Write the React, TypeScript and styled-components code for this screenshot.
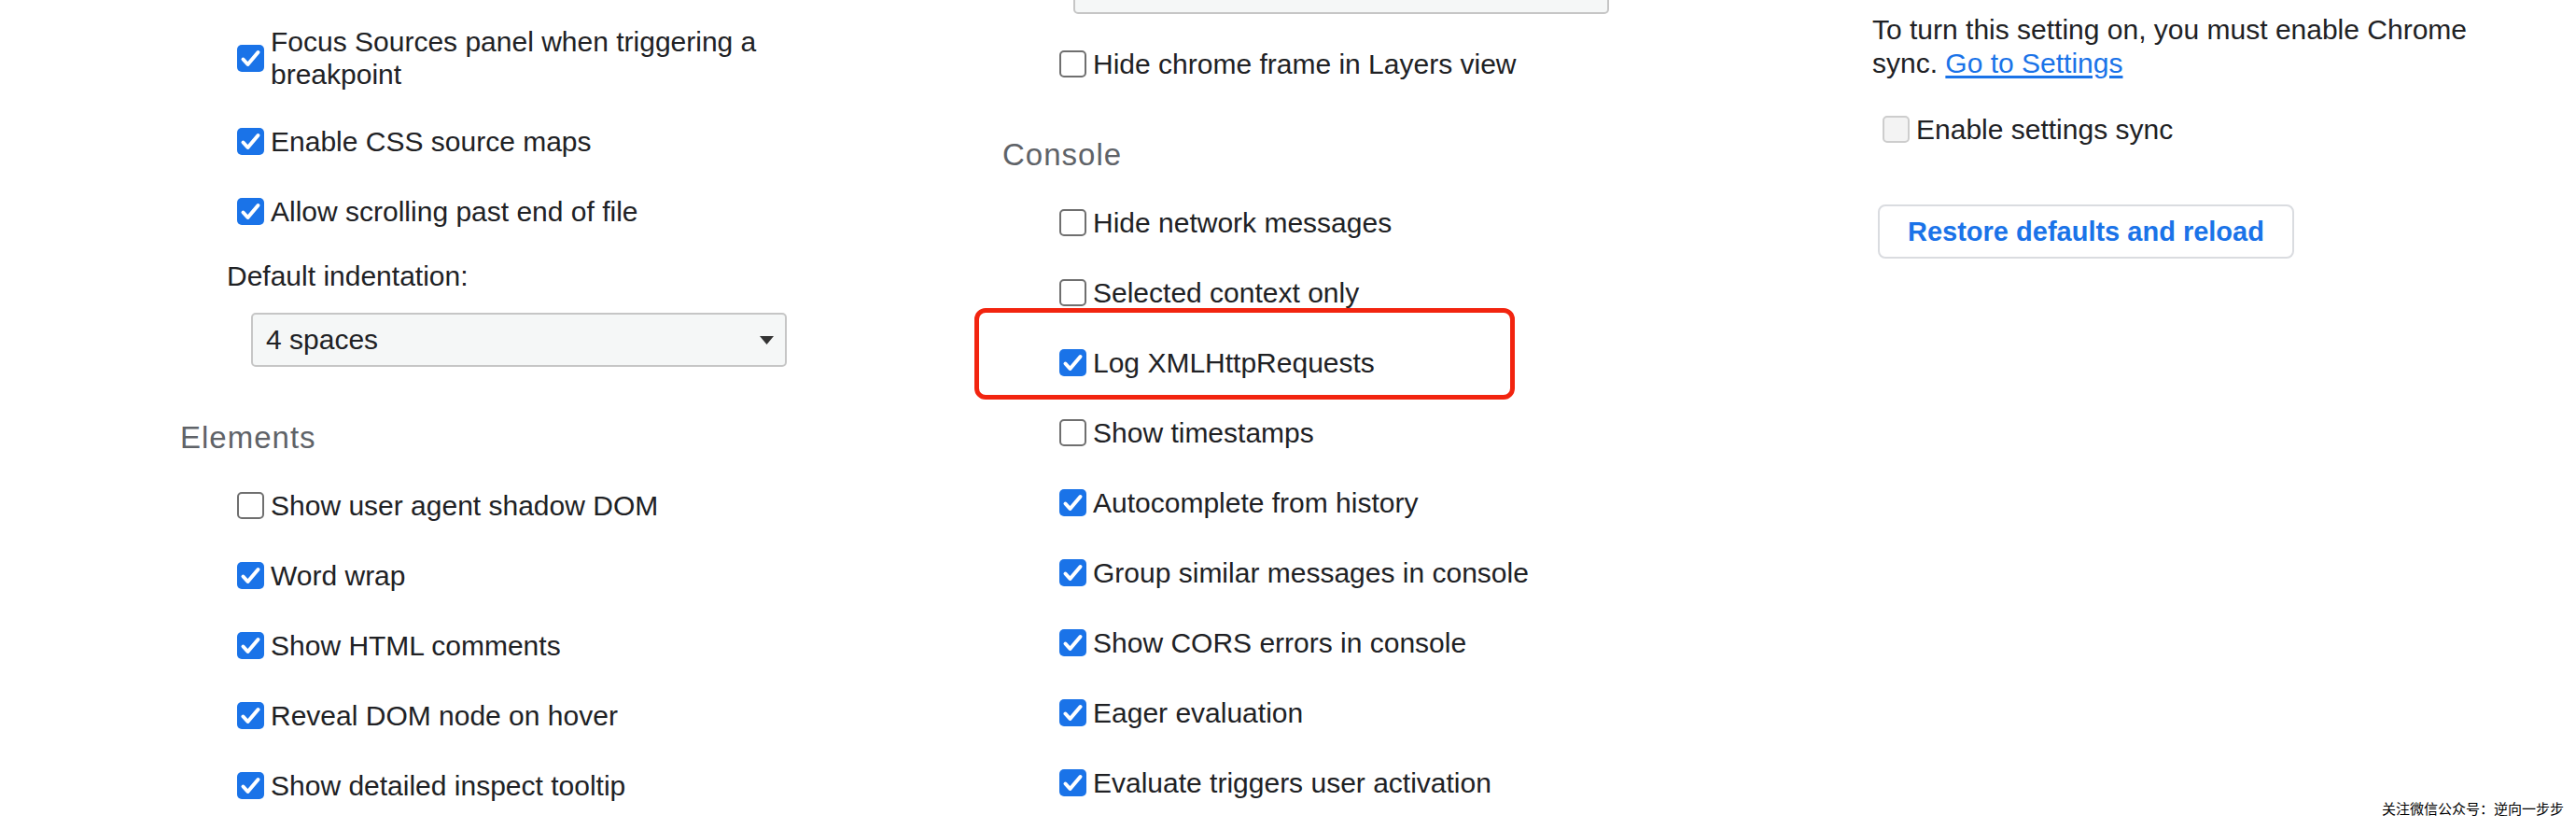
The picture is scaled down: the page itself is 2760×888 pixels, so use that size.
import React from "react";
import styled, { createGlobalStyle, css } from "styled-components";

const GlobalStyle = createGlobalStyle`
  html, body {
    margin: 0;
    padding: 0;
    background: #ffffff;
    overflow: hidden;
  }
  body {
    font-family: "Liberation Sans", Arial, sans-serif;
    color: #202124;
  }
  * { box-sizing: border-box; }
`;

const Page = styled.div`
  position: relative;
  width: 2760px;
  height: 888px;
  overflow: hidden;
  display: flex;
  align-items: flex-start;
  padding-left: 193px;
  background: #ffffff;
`;

const Column = styled.div<{ $offset: number }>`
  width: 881px;
  flex-shrink: 0;
  display: flex;
  flex-direction: column;
  align-items: flex-start;
  margin-top: ${(p) => p.$offset}px;
`;

const Section = styled.section`
  display: flex;
  flex-direction: column;
  align-items: flex-start;
  & + & {
    margin-top: 43px;
  }
`;

const SectionTitle = styled.h2`
  margin: -1px 0 17px 0;
  font-size: 33px;
  line-height: 36px;
  letter-spacing: 1px;
  font-weight: 400;
  color: #5f6368;
`;

const CheckRow = styled.label<{ $multi?: boolean; $indent?: number }>`
  display: flex;
  align-items: center;
  gap: 7px;
  padding: ${(p) => (p.$multi ? "17px" : "20px")} 0;
  padding-left: ${(p) => p.$indent ?? 61}px;
`;

type BoxState = "on" | "off" | "disabled";

const Box = styled.span<{ $state: BoxState }>`
  width: 29px;
  height: 29px;
  flex-shrink: 0;
  border-radius: 5px;
  display: flex;
  align-items: center;
  justify-content: center;
  ${(p) =>
    p.$state === "on"
      ? css`
          background: #1a73e8;
          border: 0;
        `
      : p.$state === "off"
      ? css`
          background: #ffffff;
          border: 2px solid #6f6f6f;
        `
      : css`
          background: #f3f3f3;
          border: 2px solid #cdcdcd;
        `}
`;

const LabelText = styled.span`
  font-size: 30px;
  line-height: 35px;
  color: #202124;
  max-width: 560px;
`;

const FieldLabel = styled.div`
  margin: 14px 0 0 50px;
  font-size: 30px;
  line-height: 36px;
  color: #202124;
`;

const SelectBox = styled.div`
  width: 574px;
  height: 58px;
  margin: 21px 0 16px 76px;
  padding: 0 12px 0 14px;
  display: flex;
  align-items: center;
  justify-content: space-between;
  border: 2px solid #c6c6c6;
  border-radius: 5px;
  background: #f5f7f7;
  font-size: 30px;
  line-height: 36px;
  color: #202124;
`;

const Paragraph = styled.p`
  margin: 0 0 0 51px;
  max-width: 680px;
  font-size: 30px;
  line-height: 36px;
  color: #202124;
`;

const Link = styled.a`
  color: #1a73e8;
  text-decoration: underline;
  text-underline-offset: 3px;
`;

const SyncRow = styled.div`
  margin-top: 15px;
`;

const Button = styled.button`
  margin: 43px 0 0 57px;
  padding: 9px 30px;
  border: 2px solid #dadce0;
  border-radius: 8px;
  background: #ffffff;
  color: #1a73e8;
  font-family: "Liberation Sans", Arial, sans-serif;
  font-size: 29px;
  line-height: 36px;
  font-weight: 700;
  cursor: pointer;
`;

const Highlight = styled.div`
  position: absolute;
  left: 1044px;
  top: 330px;
  width: 579px;
  height: 98px;
  border: 5px solid #f2240f;
  border-radius: 12px;
  pointer-events: none;
`;

const Watermark = styled.div`
  position: absolute;
  right: 13px;
  top: 858px;
  font-family: "Noto Sans CJK SC", sans-serif;
  font-size: 15px;
  line-height: 16px;
  color: #000000;
  white-space: nowrap;
`;

const Check = () => (
  <svg width="29" height="29" viewBox="0 0 29 29" aria-hidden="true">
    <path
      d="M6.5 15.5 L11.5 21 L22.5 8"
      fill="none"
      stroke="#ffffff"
      strokeWidth="4"
      strokeLinecap="round"
      strokeLinejoin="round"
    />
  </svg>
);

const Arrow = () => (
  <svg width="15" height="9" viewBox="0 0 15 9" aria-hidden="true">
    <path d="M0 0 H15 L7.5 9 Z" fill="#333333" />
  </svg>
);

type RowProps = { label: string; checked?: boolean; disabled?: boolean; multi?: boolean; indent?: number };

const Setting = ({ label, checked, disabled, multi, indent }: RowProps) => {
  const state: BoxState = disabled ? "disabled" : checked ? "on" : "off";
  return (
    <CheckRow $multi={multi} $indent={indent}>
      <Box $state={state} role="checkbox" aria-checked={!!checked}>
        {state === "on" && <Check />}
      </Box>
      <LabelText>{label}</LabelText>
    </CheckRow>
  );
};

export default function App() {
  return (
    <>
      <GlobalStyle />
      <Page>
        <Column $offset={10}>
          <Section>
            <Setting label="Focus Sources panel when triggering a breakpoint" checked multi />
            <Setting label="Enable CSS source maps" checked />
            <Setting label="Allow scrolling past end of file" checked />
            <FieldLabel>Default indentation:</FieldLabel>
            <SelectBox role="combobox">
              <span>4 spaces</span>
              <Arrow />
            </SelectBox>
          </Section>
          <Section>
            <SectionTitle>Elements</SectionTitle>
            <Setting label="Show user agent shadow DOM" />
            <Setting label="Word wrap" checked />
            <Setting label="Show HTML comments" checked />
            <Setting label="Reveal DOM node on hover" checked />
            <Setting label="Show detailed inspect tooltip" checked />
          </Section>
        </Column>

        <Column $offset={-64}>
          <Section>
            <SelectBox role="combobox">
              <span />
              <Arrow />
            </SelectBox>
            <Setting label="Hide chrome frame in Layers view" />
          </Section>
          <Section>
            <SectionTitle>Console</SectionTitle>
            <Setting label="Hide network messages" />
            <Setting label="Selected context only" />
            <Setting label="Log XMLHttpRequests" checked />
            <Setting label="Show timestamps" />
            <Setting label="Autocomplete from history" checked />
            <Setting label="Group similar messages in console" checked />
            <Setting label="Show CORS errors in console" checked />
            <Setting label="Eager evaluation" checked />
            <Setting label="Evaluate triggers user activation" checked />
          </Section>
        </Column>

        <Column $offset={14}>
          <Paragraph>
            To turn this setting on, you must enable Chrome sync. <Link href="#">Go to Settings</Link>
          </Paragraph>
          <SyncRow>
            <Setting label="Enable settings sync" disabled indent={62} />
          </SyncRow>
          <Button type="button">Restore defaults and reload</Button>
        </Column>

        <Highlight />
        <Watermark>关注微信公众号：逆向一步步</Watermark>
      </Page>
    </>
  );
}
